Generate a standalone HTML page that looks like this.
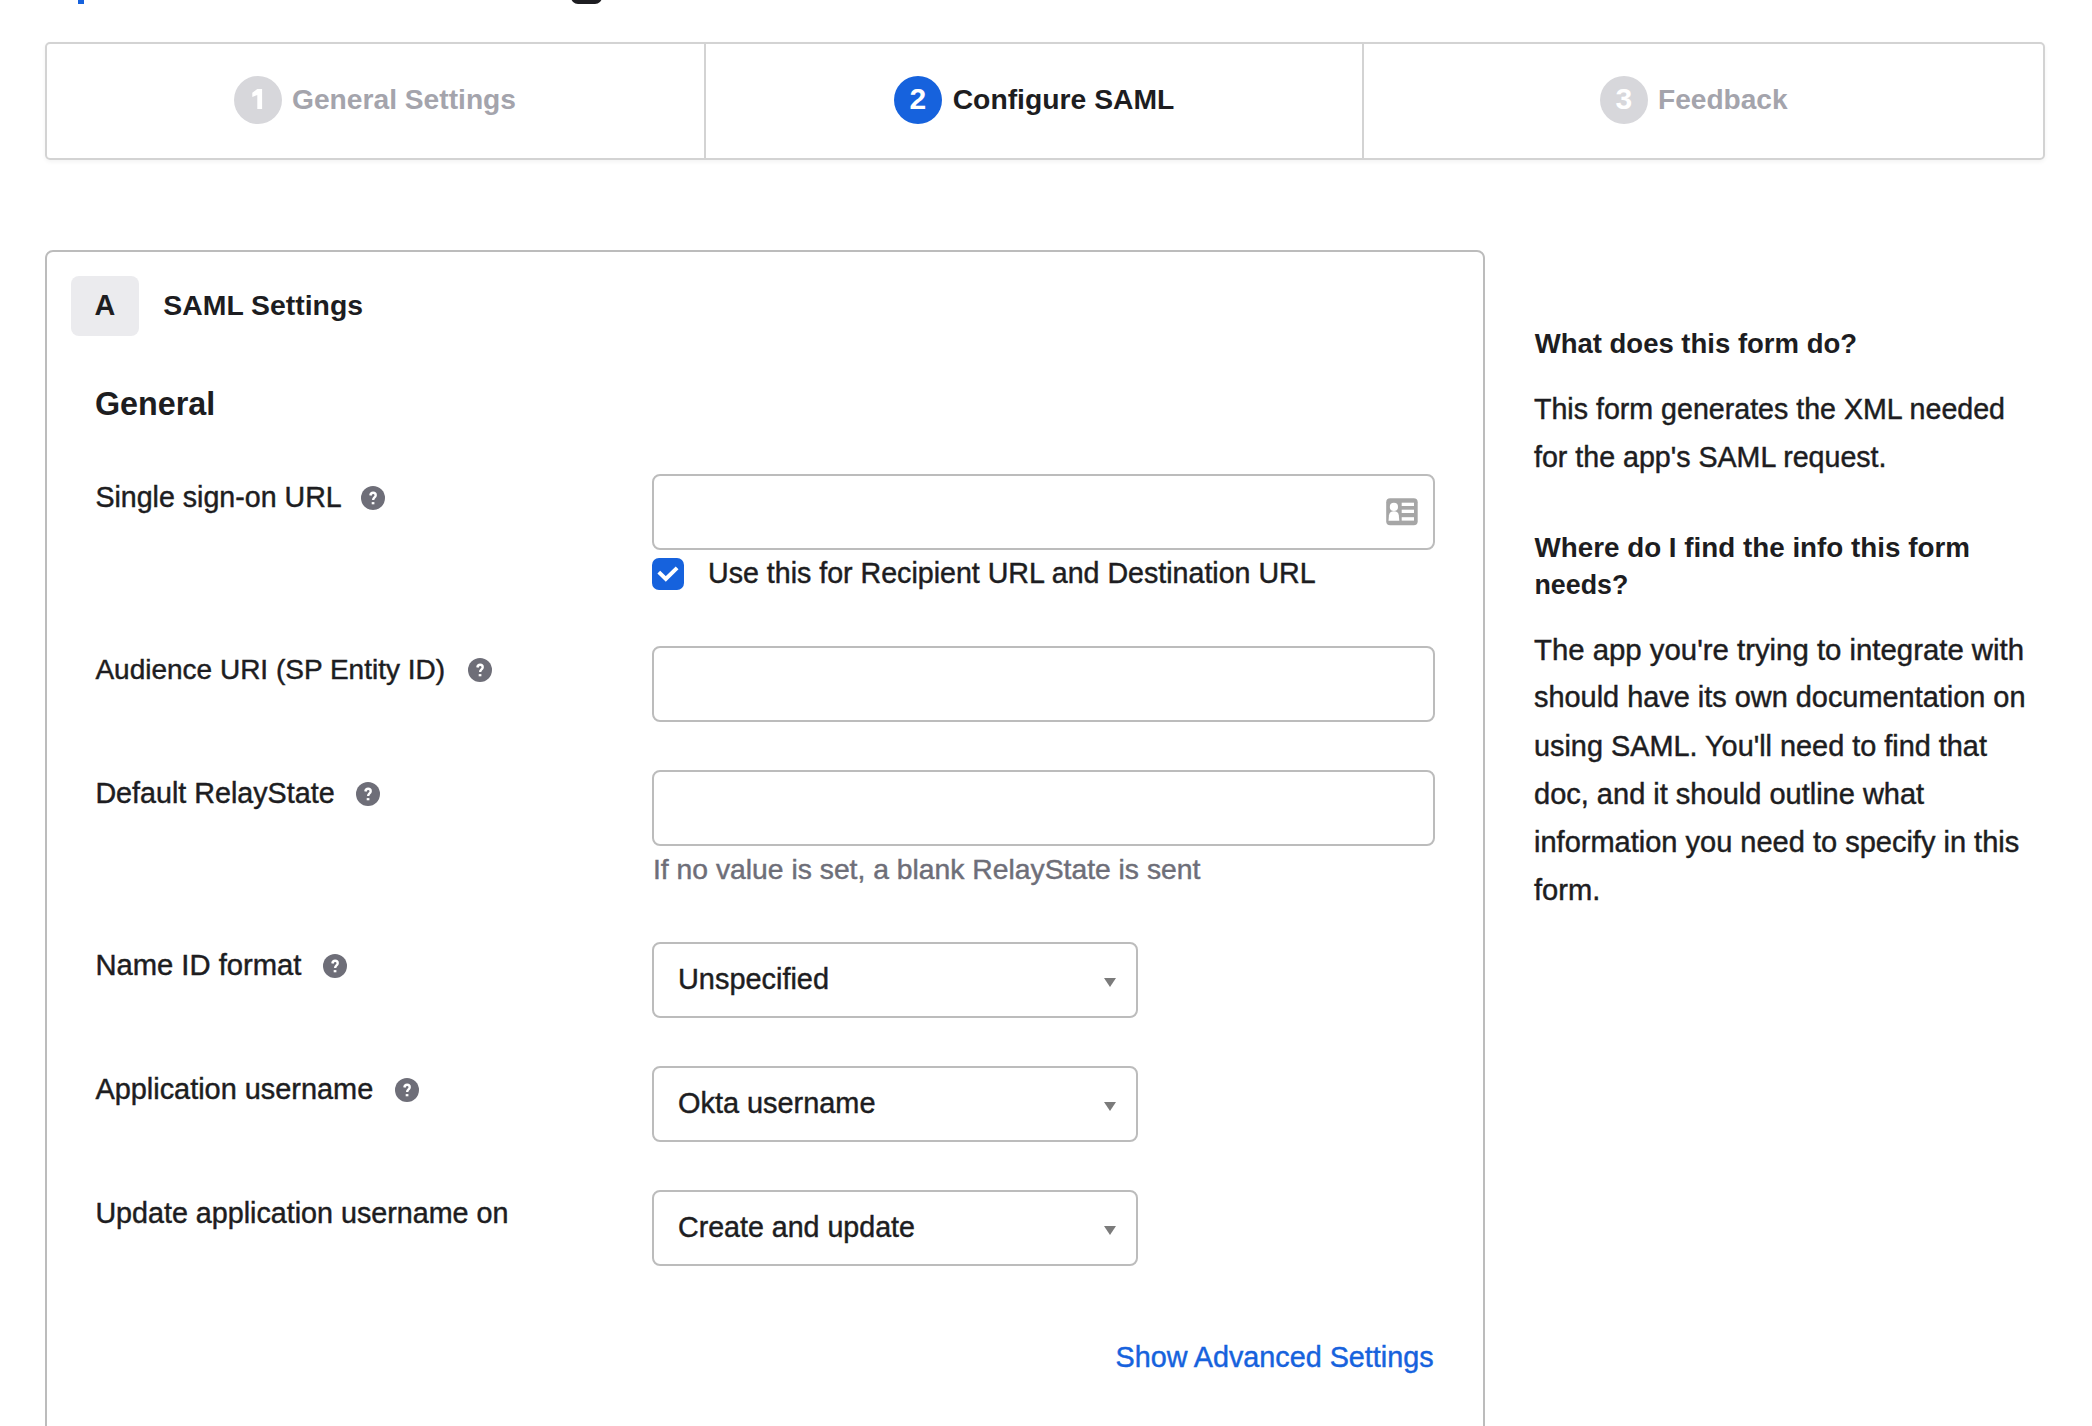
<!DOCTYPE html>
<html><head><meta charset="utf-8">
<style>
html,body{margin:0;padding:0;background:#fff;width:2092px;height:1426px;overflow:hidden;}
body{position:relative;font-family:"Liberation Sans",sans-serif;}
.t{position:absolute;white-space:nowrap;}
.r{-webkit-text-stroke:0.45px currentColor;}
.box{position:absolute;box-sizing:border-box;}
.help{position:absolute;width:24px;height:24px;border-radius:50%;background:#6e6e78;}
.input{position:absolute;box-sizing:border-box;border:2px solid #bcbcbc;border-radius:8px;background:#fff;}
.arrow{position:absolute;width:0;height:0;border-left:6px solid transparent;border-right:6px solid transparent;border-top:9px solid #7b7b7b;}
</style></head><body>
<div class="box" style="left:78px;top:0;width:6px;height:4px;background:#1662dd"></div>
<div class="box" style="left:571px;top:-20px;width:31px;height:23.8px;background:#1d1d21;border-radius:7px"></div>
<div class="box" style="left:45px;top:42px;width:2000px;height:118px;border:2px solid #d3d3d3;border-radius:5px;box-shadow:0 2px 4px rgba(0,0,0,0.05)"></div>
<div class="box" style="left:704px;top:44px;width:2px;height:114px;background:#d3d3d3"></div>
<div class="box" style="left:1362px;top:44px;width:2px;height:114px;background:#d3d3d3"></div>
<div class="box" style="left:234px;top:76px;width:48px;height:48px;border-radius:50%;background:#d7d7db"></div>
<div class="box" style="left:894px;top:76px;width:48px;height:48px;border-radius:50%;background:#1662dd"></div>
<div class="box" style="left:1600px;top:76px;width:48px;height:48px;border-radius:50%;background:#d7d7db"></div>
<svg class="box" style="left:234px;top:76px" width="48" height="48" viewBox="0 0 48 48"><path d="M23.3 12.9 H28.1 V33.1 H23.3 V18.9 L18.3 21.0 V16.7 Z" fill="#fff"/></svg>
<div class="t" style="left:909.5px;top:83.60px;font-size:30px;line-height:30px;font-weight:700;color:#fff;">2</div>
<div class="t" style="left:1615.5px;top:83.60px;font-size:30px;line-height:30px;font-weight:700;color:#fff;">3</div>
<div class="t" style="left:292.0px;top:85.13px;font-size:28.2px;line-height:28.2px;font-weight:700;color:#a4a4ac;">General Settings</div>
<div class="t" style="left:952.7px;top:85.04px;font-size:28.3px;line-height:28.3px;font-weight:700;color:#1d1d21;">Configure SAML</div>
<div class="t" style="left:1658.0px;top:86.01px;font-size:28.1px;line-height:28.1px;font-weight:700;color:#a4a4ac;">Feedback</div>
<div class="box" style="left:45px;top:250px;width:1440px;height:1300px;border:2px solid #bcbcbc;border-radius:8px"></div>
<div class="box" style="left:71px;top:276px;width:68px;height:60px;border-radius:8px;background:#ebebee"></div>
<div class="t" style="left:94.5px;top:290.62px;font-size:28.8px;line-height:28.8px;font-weight:700;color:#1d1d21;">A</div>
<div class="t" style="left:163.3px;top:290.96px;font-size:28.4px;line-height:28.4px;font-weight:700;color:#1d1d21;">SAML Settings</div>
<div class="t" style="left:95.0px;top:387.66px;font-size:32.3px;line-height:32.3px;font-weight:700;color:#1d1d21;">General</div>
<div class="t r" style="left:95.4px;top:482.79px;font-size:28.6px;line-height:28.6px;font-weight:400;color:#1d1d21;">Single sign-on URL</div>
<svg class="box" style="left:360.8px;top:485.8px" width="24" height="24" viewBox="0 0 24 24"><circle cx="12" cy="12" r="12" fill="#6e6e78"/><path d="M9.4 9.5 C9.6 7.7 10.7 6.8 12.1 6.8 C13.6 6.8 14.7 7.8 14.7 9.2 C14.7 10.5 13.9 11.1 13.1 11.8 C12.4 12.4 12.2 12.9 12.2 14.1" fill="none" stroke="#fff" stroke-width="2.4"/><rect x="10.7" y="16.1" width="2.7" height="2.2" fill="#fff"/></svg>
<div class="t r" style="left:95.4px;top:656.30px;font-size:28.0px;line-height:28.0px;font-weight:400;color:#1d1d21;">Audience URI (SP Entity ID)</div>
<svg class="box" style="left:467.5px;top:658.0px" width="24" height="24" viewBox="0 0 24 24"><circle cx="12" cy="12" r="12" fill="#6e6e78"/><path d="M9.4 9.5 C9.6 7.7 10.7 6.8 12.1 6.8 C13.6 6.8 14.7 7.8 14.7 9.2 C14.7 10.5 13.9 11.1 13.1 11.8 C12.4 12.4 12.2 12.9 12.2 14.1" fill="none" stroke="#fff" stroke-width="2.4"/><rect x="10.7" y="16.1" width="2.7" height="2.2" fill="#fff"/></svg>
<div class="t r" style="left:95.4px;top:778.71px;font-size:28.7px;line-height:28.7px;font-weight:400;color:#1d1d21;">Default RelayState</div>
<svg class="box" style="left:356.4px;top:782.0px" width="24" height="24" viewBox="0 0 24 24"><circle cx="12" cy="12" r="12" fill="#6e6e78"/><path d="M9.4 9.5 C9.6 7.7 10.7 6.8 12.1 6.8 C13.6 6.8 14.7 7.8 14.7 9.2 C14.7 10.5 13.9 11.1 13.1 11.8 C12.4 12.4 12.2 12.9 12.2 14.1" fill="none" stroke="#fff" stroke-width="2.4"/><rect x="10.7" y="16.1" width="2.7" height="2.2" fill="#fff"/></svg>
<div class="t r" style="left:95.4px;top:951.28px;font-size:29.2px;line-height:29.2px;font-weight:400;color:#1d1d21;">Name ID format</div>
<svg class="box" style="left:323.0px;top:954.0px" width="24" height="24" viewBox="0 0 24 24"><circle cx="12" cy="12" r="12" fill="#6e6e78"/><path d="M9.4 9.5 C9.6 7.7 10.7 6.8 12.1 6.8 C13.6 6.8 14.7 7.8 14.7 9.2 C14.7 10.5 13.9 11.1 13.1 11.8 C12.4 12.4 12.2 12.9 12.2 14.1" fill="none" stroke="#fff" stroke-width="2.4"/><rect x="10.7" y="16.1" width="2.7" height="2.2" fill="#fff"/></svg>
<div class="t r" style="left:95.4px;top:1074.54px;font-size:28.9px;line-height:28.9px;font-weight:400;color:#1d1d21;">Application username</div>
<svg class="box" style="left:394.8px;top:1078.0px" width="24" height="24" viewBox="0 0 24 24"><circle cx="12" cy="12" r="12" fill="#6e6e78"/><path d="M9.4 9.5 C9.6 7.7 10.7 6.8 12.1 6.8 C13.6 6.8 14.7 7.8 14.7 9.2 C14.7 10.5 13.9 11.1 13.1 11.8 C12.4 12.4 12.2 12.9 12.2 14.1" fill="none" stroke="#fff" stroke-width="2.4"/><rect x="10.7" y="16.1" width="2.7" height="2.2" fill="#fff"/></svg>
<div class="t r" style="left:95.4px;top:1198.71px;font-size:28.7px;line-height:28.7px;font-weight:400;color:#1d1d21;">Update application username on</div>
<div class="input" style="left:652px;top:474px;width:783px;height:76px"></div>
<div class="input" style="left:652px;top:646px;width:783px;height:76px"></div>
<div class="input" style="left:652px;top:770px;width:783px;height:76px"></div>
<svg class="box" style="left:1386px;top:498px" width="32" height="28" viewBox="0 0 32 28">
<rect x="0.2" y="0.3" width="31.5" height="27" rx="4" fill="#a6a6a6"/>
<circle cx="7.9" cy="8.9" r="4.1" fill="#fff"/>
<path d="M2.5 22.7 L3 17.2 Q3.6 13.3 7.9 13.2 Q12.3 13.3 12.8 17.2 L13.3 22.7 Z" fill="#fff"/>
<rect x="15.7" y="4.7" width="12.3" height="3.3" fill="#fff"/>
<rect x="15.7" y="11.7" width="12.3" height="3.3" fill="#fff"/>
<rect x="15.7" y="19.2" width="12.3" height="3.4" fill="#fff"/>
</svg>
<svg class="box" style="left:652px;top:558px" width="32" height="32" viewBox="0 0 32 32">
<rect x="0" y="0" width="32" height="32" rx="7" fill="#1662dd"/>
<polyline points="6.8,14.1 13.8,20.9 25.1,9.9" fill="none" stroke="#fff" stroke-width="4"/>
</svg>
<div class="t r" style="left:708.0px;top:558.79px;font-size:28.6px;line-height:28.6px;font-weight:400;color:#1d1d21;">Use this for Recipient URL and Destination URL</div>
<div class="t r" style="left:653.0px;top:855.04px;font-size:28.3px;line-height:28.3px;font-weight:400;color:#6e6e78;">If no value is set, a blank RelayState is sent</div>
<div class="input" style="left:652px;top:942px;width:486px;height:76px"></div>
<div class="t r" style="left:678.0px;top:964.54px;font-size:28.9px;line-height:28.9px;font-weight:400;color:#1d1d21;">Unspecified</div>
<div class="arrow" style="left:1104px;top:978px"></div>
<div class="input" style="left:652px;top:1066px;width:486px;height:76px"></div>
<div class="t r" style="left:678.0px;top:1088.54px;font-size:28.9px;line-height:28.9px;font-weight:400;color:#1d1d21;">Okta username</div>
<div class="arrow" style="left:1104px;top:1102px"></div>
<div class="input" style="left:652px;top:1190px;width:486px;height:76px"></div>
<div class="t r" style="left:678.0px;top:1212.79px;font-size:28.6px;line-height:28.6px;font-weight:400;color:#1d1d21;">Create and update</div>
<div class="arrow" style="left:1104px;top:1226px"></div>
<div class="t r" style="left:1115.5px;top:1342.66px;font-size:28.75px;line-height:28.75px;font-weight:400;color:#1662dd;">Show Advanced Settings</div>
<div class="t" style="left:1534.7px;top:329.72px;font-size:27.5px;line-height:27.5px;font-weight:700;color:#1d1d21;">What does this form do?</div>
<div class="t r" style="left:1534.0px;top:394.79px;font-size:28.6px;line-height:28.6px;font-weight:400;color:#1d1d21;">This form generates the XML needed</div>
<div class="t r" style="left:1534.0px;top:442.79px;font-size:28.6px;line-height:28.6px;font-weight:400;color:#1d1d21;">for the app's SAML request.</div>
<div class="t" style="left:1534.5px;top:534.47px;font-size:27.8px;line-height:27.8px;font-weight:700;color:#1d1d21;">Where do I find the info this form</div>
<div class="t" style="left:1534.5px;top:572.31px;font-size:26.8px;line-height:26.8px;font-weight:700;color:#1d1d21;">needs?</div>
<div class="t r" style="left:1534.0px;top:634.96px;font-size:29.35px;line-height:29.35px;font-weight:400;color:#1d1d21;">The app you're trying to integrate with</div>
<div class="t r" style="left:1534.0px;top:683.44px;font-size:28.9px;line-height:28.9px;font-weight:400;color:#1d1d21;">should have its own documentation on</div>
<div class="t r" style="left:1534.0px;top:731.58px;font-size:28.85px;line-height:28.85px;font-weight:400;color:#1d1d21;">using SAML. You'll need to find that</div>
<div class="t r" style="left:1534.0px;top:779.55px;font-size:29.0px;line-height:29.0px;font-weight:400;color:#1d1d21;">doc, and it should outline what</div>
<div class="t r" style="left:1534.0px;top:827.65px;font-size:29.0px;line-height:29.0px;font-weight:400;color:#1d1d21;">information you need to specify in this</div>
<div class="t r" style="left:1534.0px;top:875.67px;font-size:29.1px;line-height:29.1px;font-weight:400;color:#1d1d21;">form.</div>
</body></html>
